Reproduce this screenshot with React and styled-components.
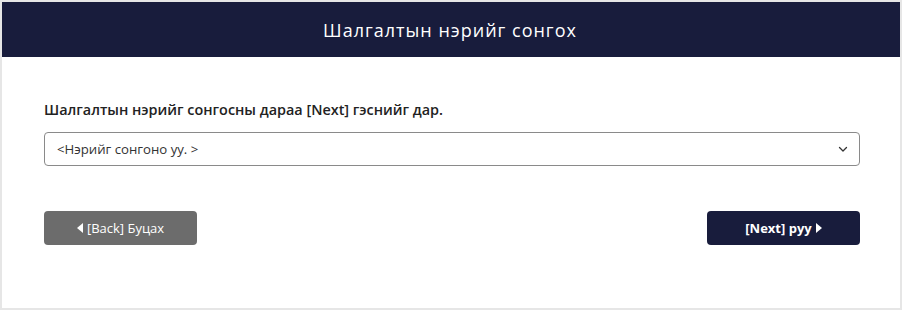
import styled, { createGlobalStyle } from "styled-components";

const GlobalStyle = createGlobalStyle`
  html, body {
    margin: 0;
    padding: 0;
    background: #e6e6e6;
  }
  body {
    font-family: "Open Sans", "Noto Sans", sans-serif;
  }
`;

function Chevron() {
  return (
    <svg width="12" height="12" viewBox="0 0 12 12" fill="none">
      <path d="M2.5 4.5 L6 8 L9.5 4.5" stroke="#333" strokeWidth="1.3" strokeLinecap="round" strokeLinejoin="round" />
    </svg>
  );
}

function Caret({ left }) {
  return (
    <svg width="6" height="10" viewBox="0 0 6 10">
      <path d={left ? "M6 0 L0 5 L6 10 Z" : "M0 0 L6 5 L0 10 Z"} fill="#fff" />
    </svg>
  );
}

export default function App() {
  return (
    <>
      <GlobalStyle />
      <Page>
        <Card>
          <Header>Шалгалтын нэрийг сонгох</Header>
          <Body>
            <Prompt>Шалгалтын нэрийг сонгосны дараа [Next] гэснийг дар.</Prompt>
            <SelectBox>
              <span>&lt;Нэрийг сонгоно уу. &gt;</span>
              <Chevron />
            </SelectBox>
            <ButtonRow>
              <NavButton $variant="back">
                <Caret left />
                [Back] Буцах
              </NavButton>
              <NavButton $variant="next">
                [Next] руу
                <Caret />
              </NavButton>
            </ButtonRow>
          </Body>
        </Card>
      </Page>
    </>
  );
}

const Page = styled.div`
  padding: 2px;
  width: 902px;
  height: 310px;
  box-sizing: border-box;
`;

const Card = styled.div`
  background: #fff;
  height: 100%;
  display: flex;
  flex-direction: column;
`;

const Header = styled.div`
  background: #181c3c;
  color: #fff;
  height: 55px;
  display: flex;
  align-items: center;
  justify-content: center;
  font-size: 18px;
  letter-spacing: 1px;
  padding-right: 2px;
`;

const Body = styled.div`
  padding: 43px 40px 0 42px;
  display: flex;
  flex-direction: column;
`;

const Prompt = styled.div`
  font-size: 14.4px;
  font-weight: 600;
  color: #222;
  line-height: 20px;
  margin-bottom: 12px;
`;

const SelectBox = styled.div`
  height: 34px;
  box-sizing: border-box;
  border: 1px solid #8a8a8a;
  border-radius: 4px;
  display: flex;
  align-items: center;
  justify-content: space-between;
  padding: 0 10px 0 12px;
  font-size: 13.2px;
  color: #333;
`;

const ButtonRow = styled.div`
  display: flex;
  justify-content: space-between;
  margin-top: 45px;
`;

const NavButton = styled.button`
  width: 153px;
  height: 34px;
  border: none;
  border-radius: 4px;
  display: flex;
  align-items: center;
  justify-content: center;
  gap: 4px;
  font-family: inherit;
  font-size: 13px;
  color: #fff;
  background: ${(p) => (p.$variant === "next" ? "#181c3c" : "#6c6c6c")};
  font-weight: ${(p) => (p.$variant === "next" ? 700 : 400)};
  cursor: pointer;
`;
